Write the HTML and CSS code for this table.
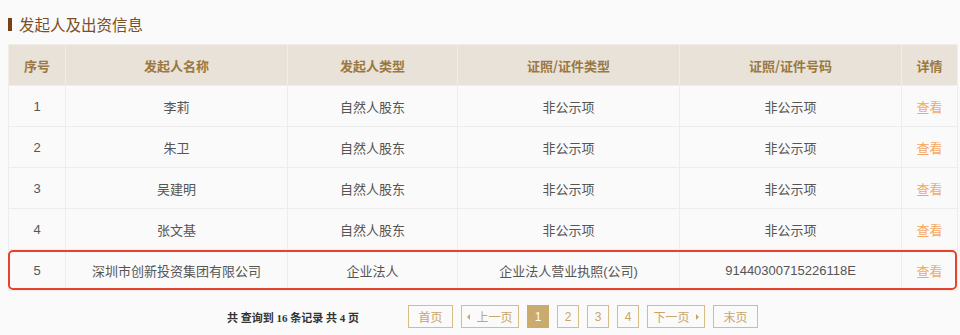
FILE: index.html
```html
<!DOCTYPE html>
<html lang="zh-CN">
<head>
<meta charset="utf-8">
<title>发起人及出资信息</title>
<link rel="stylesheet" href="styles.css">
</head>
<body>
<div class="title"><span class="title-bar"></span><span class="title-text">发起人及出资信息</span></div>
<div class="table-wrap">
  <table class="grid">
    <colgroup>
      <col class="c1"><col class="c2"><col class="c3"><col class="c4"><col class="c5"><col class="c6">
    </colgroup>
    <thead>
      <tr><th>序号</th><th>发起人名称</th><th>发起人类型</th><th>证照/证件类型</th><th>证照/证件号码</th><th>详情</th></tr>
    </thead>
    <tbody>
      <tr><td>1</td><td>李莉</td><td>自然人股东</td><td>非公示项</td><td>非公示项</td><td><span class="link">查看</span></td></tr>
      <tr><td>2</td><td>朱卫</td><td>自然人股东</td><td>非公示项</td><td>非公示项</td><td><span class="link">查看</span></td></tr>
      <tr><td>3</td><td>吴建明</td><td>自然人股东</td><td>非公示项</td><td>非公示项</td><td><span class="link">查看</span></td></tr>
      <tr><td>4</td><td>张文基</td><td>自然人股东</td><td>非公示项</td><td>非公示项</td><td><span class="link">查看</span></td></tr>
      <tr><td>5</td><td>深圳市创新投资集团有限公司</td><td>企业法人</td><td>企业法人营业执照(公司)</td><td>91440300715226118E</td><td><span class="link">查看</span></td></tr>
    </tbody>
  </table>
  <div class="highlight"></div>
</div>
<div class="pager">
  <span class="pager-info">共 查询到 16 条记录 共 4 页</span>
  <div class="pager-btns">
    <span class="pbtn w45">首页</span>
    <span class="pbtn w58"><i class="tri-l"></i>上一页</span>
    <span class="pbtn num active">1</span>
    <span class="pbtn num">2</span>
    <span class="pbtn num">3</span>
    <span class="pbtn num">4</span>
    <span class="pbtn w58">下一页<i class="tri-r"></i></span>
    <span class="pbtn w45">末页</span>
  </div>
</div>
</body>
</html>
```
FILE: styles.css
```css
html, body {
  margin: 0;
  padding: 0;
  background: #fafafa;
}
body {
  padding: 0 8px;
  font-family: "Liberation Sans", "Noto Sans CJK SC", sans-serif;
  color: #555;
}
.title {
  display: flex;
  align-items: center;
  height: 16px;
  margin-top: 16px;
  margin-bottom: 12px;
}
.title-bar {
  width: 4px;
  height: 13px;
  background: #7a3f12;
  margin-right: 7px;
}
.title-text {
  font-family: "Noto Sans CJK SC", sans-serif;
  font-size: 15.5px;
  line-height: 16px;
  color: #7d4f26;
}
.table-wrap {
  position: relative;
  width: 949px;
}
.grid {
  width: 949px;
  border-collapse: collapse;
  table-layout: fixed;
  font-size: 13px;
}
.c1 { width: 57px; }
.c2 { width: 222px; }
.c3 { width: 170px; }
.c4 { width: 222px; }
.c5 { width: 222px; }
.c6 { width: 56px; }
.grid th, .grid td {
  height: 40px;
  padding: 0;
  text-align: center;
  border: 1px solid #ededed;
}
.grid th {
  background: #e9e2d8;
  color: #9a7841;
  font-weight: bold;
  border-color: #f1ede7;
  font-family: "Noto Sans CJK SC", sans-serif;
  font-size: 13px;
}
.grid td {
  background: #fafafa;
  color: #555;
}
.link {
  color: #f5a865;
  font-family: "Noto Sans CJK SC", sans-serif;
}
.highlight {
  position: absolute;
  left: 0;
  right: 0;
  bottom: 1px;
  height: 40px;
  border: 2px solid #e8412c;
  border-radius: 5px;
  box-sizing: border-box;
}
.pager {
  display: flex;
  align-items: center;
  margin-top: 14px;
  padding-left: 219px;
}
.pager-info {
  font-family: "Liberation Serif", "Noto Sans CJK SC", serif;
  font-weight: bold;
  font-size: 11px;
  color: #333;
  width: 181px;
}
.pager-btns {
  display: flex;
  gap: 8px;
}
.pbtn {
  display: flex;
  align-items: center;
  justify-content: center;
  height: 23px;
  box-sizing: border-box;
  border: 1px solid #d9bb86;
  color: #c8a56a;
  font-size: 12px;
  font-family: "Liberation Sans", "Noto Sans CJK SC", sans-serif;
  background: #fafafa;
}
.w45 { width: 45px; }
.w58 { width: 58px; }
.num { width: 22px; }
.active {
  background: #cbaa6d;
  border-color: #cbaa6d;
  color: #fff;
}
.tri-l {
  width: 0;
  height: 0;
  border-top: 3px solid transparent;
  border-bottom: 3px solid transparent;
  border-right: 3px solid #c8a56a;
  margin-right: 6px;
}
.tri-r {
  width: 0;
  height: 0;
  border-top: 3px solid transparent;
  border-bottom: 3px solid transparent;
  border-left: 3px solid #c8a56a;
  margin-left: 6px;
}
```
